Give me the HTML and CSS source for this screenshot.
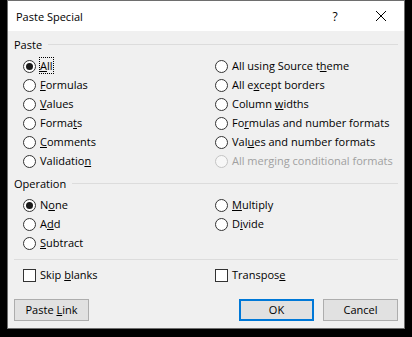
FILE: index.html
```html
<!DOCTYPE html>
<html lang="en">

<head>
  <meta charset="UTF-8">
  <meta name="viewport" content="width=device-width, initial-scale=1.0">
  <title>Paste Special</title>
  <link rel="stylesheet" href="styles.css">
</head>

<body>
  <div class="dialog">
    <div class="titlebar">
      <span class="title">Paste Special</span>
      <span class="caption-btn help">?</span>
      <span class="caption-btn close">
        <svg width="10" height="10" viewBox="0 0 10 10">
          <path d="M0 0L10 10M10 0L0 10" stroke="#000" stroke-width="1" fill="none"/>
        </svg>
      </span>
    </div>

    <div class="content">
      <div class="legend"><span>Paste</span></div>
      <div class="options paste">
        <label class="option"><span class="radio checked"></span><span class="text focus"><u>A</u>ll</span></label>
        <label class="option"><span class="radio"></span><span class="text"><u>F</u>ormulas</span></label>
        <label class="option"><span class="radio"></span><span class="text"><u>V</u>alues</span></label>
        <label class="option"><span class="radio"></span><span class="text">Forma<u>t</u>s</span></label>
        <label class="option"><span class="radio"></span><span class="text"><u>C</u>omments</span></label>
        <label class="option"><span class="radio"></span><span class="text">Validatio<u>n</u></span></label>
        <label class="option"><span class="radio"></span><span class="text">All using Source t<u>h</u>eme</span></label>
        <label class="option"><span class="radio"></span><span class="text">All e<u>x</u>cept borders</span></label>
        <label class="option"><span class="radio"></span><span class="text">Column <u>w</u>idths</span></label>
        <label class="option"><span class="radio"></span><span class="text">Fo<u>r</u>mulas and number formats</span></label>
        <label class="option"><span class="radio"></span><span class="text">Val<u>u</u>es and number formats</span></label>
        <label class="option disabled"><span class="radio"></span><span class="text">All merging conditional formats</span></label>
      </div>

      <div class="legend op-legend"><span>Operation</span></div>
      <div class="options operation">
        <label class="option"><span class="radio checked"></span><span class="text">N<u>o</u>ne</span></label>
        <label class="option"><span class="radio"></span><span class="text">A<u>d</u>d</span></label>
        <label class="option"><span class="radio"></span><span class="text"><u>S</u>ubtract</span></label>
        <label class="option"><span class="radio"></span><span class="text"><u>M</u>ultiply</span></label>
        <label class="option"><span class="radio"></span><span class="text">D<u>i</u>vide</span></label>
      </div>

      <hr class="separator">

      <div class="options checks">
        <label class="option"><span class="checkbox"></span><span class="text">Skip <u>b</u>lanks</span></label>
        <label class="option"><span class="checkbox"></span><span class="text">Transpos<u>e</u></span></label>
      </div>

      <div class="buttons">
        <button type="button">Paste <u>L</u>ink</button>
        <button type="button" class="default">OK</button>
        <button type="button">Cancel</button>
      </div>
    </div>
  </div>
</body>

</html>
```

FILE: styles.css
```css
*,*::before,*::after { box-sizing: border-box; }

body {
  margin: 0;
  padding: 0 7px;
  height: 337px;
  background: #000;
  font-family: "Open Sans", "Liberation Sans", sans-serif;
  font-size: 11px;
  color: #000;
}

.dialog {
  width: 398px;
  height: 329px;
  border: 1px solid #6e6e6e;
  background: #f0f0f0;
  display: flex;
  flex-direction: column;
}

.titlebar {
  height: 30px;
  background: #fff;
  display: flex;
  align-items: center;
}

.title {
  flex: 1;
  padding-left: 8px;
  font-size: 11px;
}

.caption-btn {
  width: 46px;
  height: 30px;
  display: flex;
  align-items: center;
  justify-content: center;
}

.help {
  font-size: 12px;
}

.content {
  flex: 1;
  padding: 5px 6px 7px;
  display: flex;
  flex-direction: column;
}

.legend {
  height: 18px;
  display: flex;
  align-items: center;
  gap: 6px;
}

.legend span { margin-bottom: 2px; }

.legend::after {
  content: "";
  flex: 1;
  height: 1px;
  margin-top: -1px;
  background: #dcdcdc;
}

.op-legend { margin-top: 4px; }

.options {
  display: grid;
  grid-template-columns: 192px 1fr;
  grid-auto-flow: column;
  padding-left: 9px;
  margin-top: 3px;
}

.paste { grid-template-rows: repeat(6, 19px); }
.operation { grid-template-rows: repeat(3, 19px); }
.checks { grid-template-rows: 19px; margin-top: 6px; }

.option {
  display: flex;
  align-items: center;
  gap: 4px;
  white-space: nowrap;
}

.option .text { margin-bottom: 2px; }

.radio {
  width: 13px;
  height: 13px;
  border: 1px solid #333;
  border-radius: 50%;
  background: #fff;
  display: flex;
  align-items: center;
  justify-content: center;
  flex: none;
}

.radio.checked::after {
  content: "";
  width: 7px;
  height: 7px;
  border-radius: 50%;
  background: #1a1a1a;
}

.checkbox {
  width: 13px;
  height: 13px;
  border: 1px solid #333;
  background: #fff;
  flex: none;
}

.disabled { color: #a0a0a0; }
.disabled .radio {
  border-color: #c4c4c4;
  background: #f7f7f7;
}

.focus {
  outline: 1px dotted #000;
  outline-offset: 0;
}

.separator {
  border: none;
  height: 1px;
  background: #dcdcdc;
  margin: 6px 0 0;
}

.buttons {
  display: flex;
  gap: 9px;
  margin-top: 14px;
}

button {
  width: 75px;
  height: 22px;
  padding: 0 0 1px;
  border: 1px solid #adadad;
  background: #e1e1e1;
  font-family: inherit;
  font-size: 11px;
  color: #000;
}

button.default {
  margin-left: auto;
  border: 2px solid #0078d7;
}
```
